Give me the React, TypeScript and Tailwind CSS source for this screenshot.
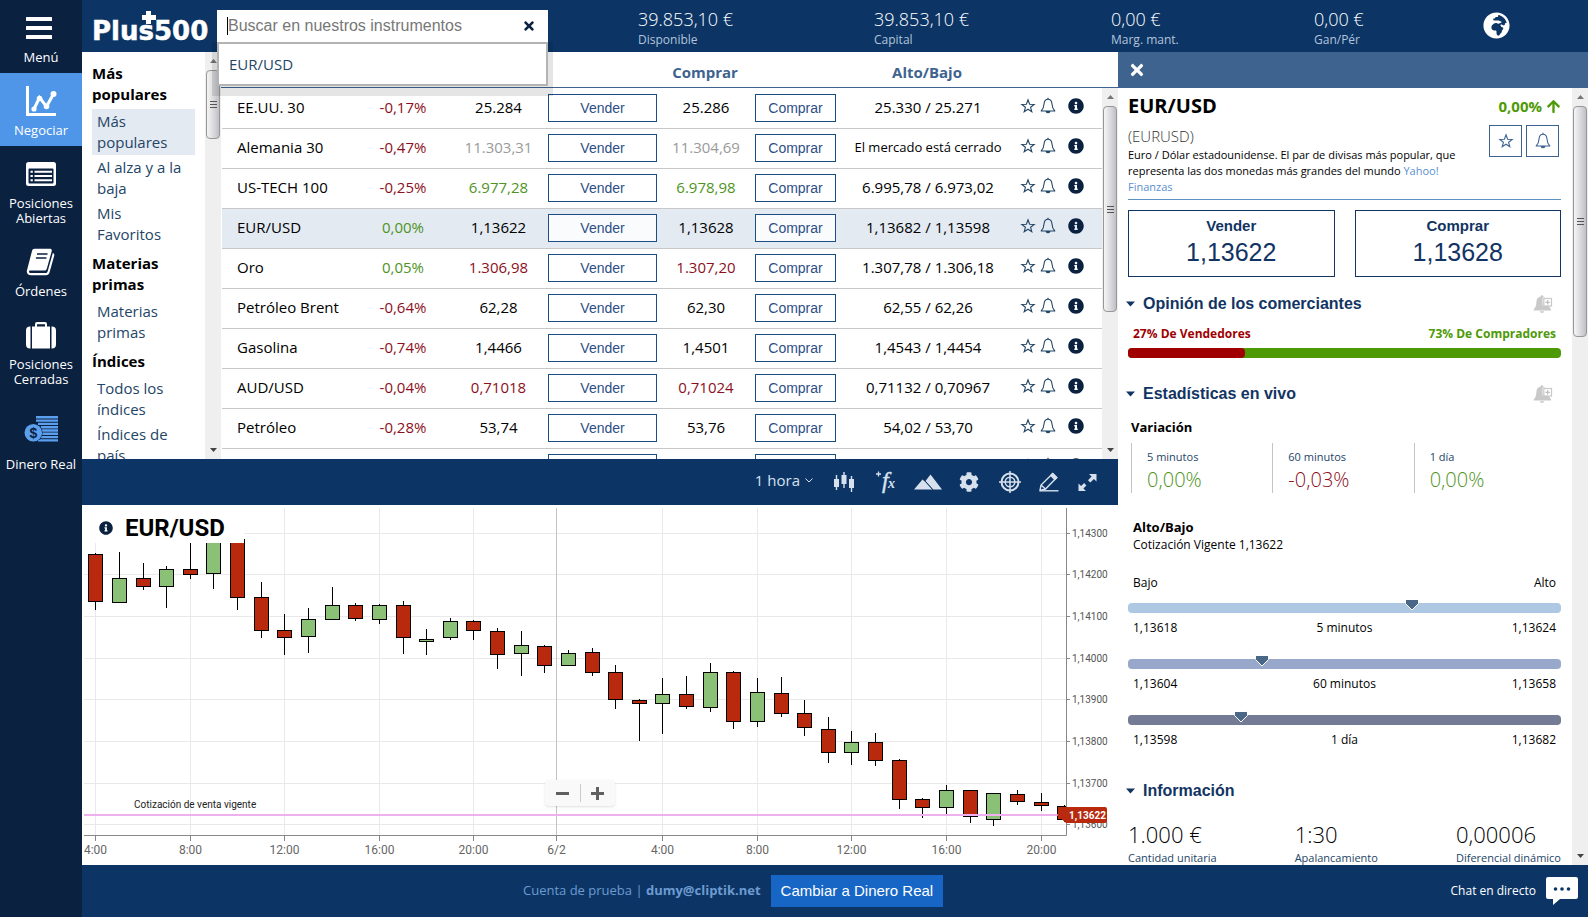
import { useState } from "react";
import { FaArrowUp, FaCog, FaGlobeAfrica, FaInfoCircle, FaTimes } from "react-icons/fa";

type Tone = "up" | "down" | "flat" | "closed";

const toneClass: Record<Tone, string> = {
  up: "text-[#4e9424]",
  down: "text-[#8c0f22]",
  flat: "text-black",
  closed: "text-[#9a9a9a]",
};

const instruments: { name: string; pct: string; sell: string; buy: string; range: string; tone: Tone }[] = [
  { name: "EE.UU. 30", pct: "-0,17%", sell: "25.284", buy: "25.286", range: "25.330 / 25.271", tone: "flat" },
  { name: "Alemania 30", pct: "-0,47%", sell: "11.303,31", buy: "11.304,69", range: "El mercado está cerrado", tone: "closed" },
  { name: "US-TECH 100", pct: "-0,25%", sell: "6.977,28", buy: "6.978,98", range: "6.995,78 / 6.973,02", tone: "up" },
  { name: "EUR/USD", pct: "0,00%", sell: "1,13622", buy: "1,13628", range: "1,13682 / 1,13598", tone: "flat" },
  { name: "Oro", pct: "0,05%", sell: "1.306,98", buy: "1.307,20", range: "1.307,78 / 1.306,18", tone: "down" },
  { name: "Petróleo Brent", pct: "-0,64%", sell: "62,28", buy: "62,30", range: "62,55 / 62,26", tone: "flat" },
  { name: "Gasolina", pct: "-0,74%", sell: "1,4466", buy: "1,4501", range: "1,4543 / 1,4454", tone: "flat" },
  { name: "AUD/USD", pct: "-0,04%", sell: "0,71018", buy: "0,71024", range: "0,71132 / 0,70967", tone: "down" },
  { name: "Petróleo", pct: "-0,28%", sell: "53,74", buy: "53,76", range: "54,02 / 53,70", tone: "flat" },
  { name: "", pct: "", sell: "", buy: "", range: "", tone: "flat" },
];

const categories = [
  { title: "Más populares", items: ["Más populares", "Al alza y a la baja", "Mis Favoritos"] },
  { title: "Materias primas", items: ["Materias primas"] },
  { title: "Índices", items: ["Todos los índices", "Índices de país"] },
];

const balances = [
  { value: "39.853,10 €", label: "Disponible" },
  { value: "39.853,10 €", label: "Capital" },
  { value: "0,00 €", label: "Marg. mant." },
  { value: "0,00 €", label: "Gan/Pér" },
];

// x, body top, body bottom, high, low, rising
const candles: [number, number, number, number, number, boolean][] = [
  [13, 49, 96, 48, 104, false],
  [37, 73, 97, 47, 97, true],
  [61, 73, 81, 58, 84, false],
  [84, 64, 81, 61, 102, true],
  [108, 64, 69, 30, 73, false],
  [131, 30, 68, 30, 83, true],
  [155, 34, 92, 34, 104, false],
  [179, 92, 125, 77, 132, false],
  [202, 125, 132, 109, 149, false],
  [226, 114, 131, 103, 147, true],
  [250, 100, 114, 82, 114, true],
  [273, 100, 113, 98, 115, false],
  [297, 100, 114, 99, 118, true],
  [321, 100, 132, 96, 148, false],
  [344, 134, 136, 124, 149, true],
  [368, 116, 132, 113, 134, true],
  [391, 116, 125, 115, 134, false],
  [415, 126, 149, 123, 163, false],
  [439, 140, 148, 126, 170, true],
  [462, 141, 160, 140, 167, false],
  [486, 148, 160, 145, 160, true],
  [510, 147, 167, 143, 170, false],
  [533, 167, 194, 160, 203, false],
  [557, 195, 198, 194, 235, false],
  [580, 189, 198, 173, 228, true],
  [604, 189, 201, 171, 203, false],
  [628, 167, 202, 158, 206, true],
  [651, 167, 216, 166, 223, false],
  [675, 187, 216, 173, 221, true],
  [699, 188, 208, 172, 211, false],
  [722, 208, 222, 195, 230, false],
  [746, 224, 247, 212, 257, false],
  [769, 237, 247, 226, 259, true],
  [793, 237, 255, 228, 260, false],
  [817, 255, 294, 254, 303, false],
  [840, 294, 302, 293, 312, false],
  [864, 285, 302, 280, 308, true],
  [888, 285, 311, 285, 317, false],
  [911, 288, 314, 288, 320, true],
  [935, 289, 296, 285, 299, false],
  [959, 297, 300, 288, 305, false],
  [982, 301, 314, 300, 316, false],
];

const timeTicks: [number, string][] = [
  [13, "4:00"], [108, "8:00"], [202, "12:00"], [297, "16:00"], [391, "20:00"], [474, "6/2"],
  [580, "4:00"], [675, "8:00"], [769, "12:00"], [864, "16:00"], [959, "20:00"],
];

const priceTicks: [number, string][] = [
  [28, "1,14300"], [69, "1,14200"], [111, "1,14100"], [153, "1,14000"],
  [194, "1,13900"], [236, "1,13800"], [278, "1,13700"], [319, "1,13600"],
];

/* ---------- icons ---------- */

function StarIcon() {
  return (
    <svg width="16" height="16" viewBox="0 0 16 16" fill="none" stroke="currentColor" strokeWidth="1.1" strokeLinejoin="miter">
      <path d="M8 1.8l1.600 4.400 4.600.2-3.600 2.900 1.200 4.500L8 11.200 4.200 13.800l1.200-4.500-3.600-2.900 4.600-.2z" />
    </svg>
  );
}

function BellIcon() {
  return (
    <svg width="16" height="18" viewBox="0 0 16 18" fill="none" stroke="currentColor" strokeWidth="1.1" strokeLinejoin="round">
      <path d="M8 2.2c-2.500 0-3.700 1.900-3.900 4.300-.2 3.300-.6 5.200-2.900 7.500h13.600c-2.300-2.300-2.700-4.200-2.900-7.500C11.700 4.100 10.500 2.200 8 2.200z" />
      <path d="M8 .8v1.400" />
      <path d="M6.200 14.500a1.900 1.900 0 0 0 3.600 0z" fill="currentColor" />
    </svg>
  );
}

function BellPlusIcon() {
  return (
    <svg width="20" height="20" viewBox="0 0 20 20" fill="#c9c9c9">
      <path d="M9 1.200c.8 0 1.200.5 1.200 1.200 1 .2 1.800.5 2.400 1.100H9.600v8h6.200c.4 1.500 1.200 2.700 2.200 3.700v1.300H.8v-1.300c2-1.900 2.500-4.300 2.600-7.400.1-3 1.600-4.900 4.400-5.400 0-.7.400-1.200 1.200-1.200zM6.800 17.300h4.400c-.2 1-1 1.700-2.200 1.700s-2-.7-2.200-1.700z" />
      <rect x="10.800" y="4.500" width="7.700" height="7.500" fill="#fff" stroke="#c9c9c9" strokeWidth="1.200" />
      <path d="M14.650 6v4.600M12.400 8.300h4.500" stroke="#c0c0c0" strokeWidth="1.200" />
    </svg>
  );
}

function MenuIcon() {
  return (
    <svg width="26" height="22" viewBox="0 0 26 22" fill="currentColor" className="-translate-x-[2px]">
      <rect width="26" height="4" rx="0.500" />
      <rect y="9" width="26" height="4" rx="0.500" />
      <rect y="18" width="26" height="4" rx="0.500" />
    </svg>
  );
}

function TradeIcon() {
  return (
    <svg width="32" height="32" viewBox="0 0 32 32" fill="none" stroke="currentColor">
      <path d="M2.500 1v28.500H31" strokeWidth="3" />
      <path d="M9 24l5.500-11.500 7 9L28.500 9" strokeWidth="3" />
      <g fill="currentColor" stroke="none">
        <circle cx="9" cy="24" r="2.600" />
        <circle cx="14.500" cy="13.500" r="2.800" />
        <circle cx="21.500" cy="21.500" r="2.800" />
        <circle cx="28.500" cy="9" r="3" />
      </g>
    </svg>
  );
}

function ListIcon() {
  return (
    <svg width="30" height="24" viewBox="0 0 30 24">
      <rect width="30" height="24" rx="2.500" fill="#fff" />
      <rect x="2.500" y="6.500" width="25" height="15" rx="1" fill="#0a2140" />
      <g stroke="#fff" strokeWidth="2">
        <path d="M4.500 9.800h2.300M8.500 9.800H26M4.500 14h2.300M8.500 14H26M4.500 18.200h2.300M8.500 18.200H26" />
      </g>
    </svg>
  );
}

function BookIcon() {
  return (
    <svg width="30" height="28" viewBox="0 0 30 28">
      <path d="M8.500.8h15.300c1.600 0 2.300 1 1.900 2.500l-4.900 17.400c-.4 1.300-1.400 1.900-2.700 1.900H4.500c-1 0-1.700.7-1.500 1.500.2.700.8 1 1.700 1h14.600c1.200 0 2-.7 2.400-1.900L26.800 5c1.200.5 1.800 1.400 1.400 2.700l-4.700 16.800c-.5 1.700-1.700 2.700-3.500 2.700H5c-2.600 0-4.500-1.800-4.200-4.300L6 3c.4-1.400 1.200-2.200 2.500-2.200z" fill="#fff" />
      <path d="M11 6h10.500M9.900 10h10.500" stroke="#0a2140" strokeWidth="1.600" />
    </svg>
  );
}

function SuitcaseIcon() {
  return (
    <svg width="30" height="27" viewBox="0 0 30 27" fill="currentColor">
      <path d="M4.500 4.500v22H4a4 4 0 0 1-4-4v-14a4 4 0 0 1 4-4zM25.500 4.500v22h.5a4 4 0 0 0 4-4v-14a4 4 0 0 0-4-4z" />
      <path d="M6 4.500h3V2a2 2 0 0 1 2-2h8a2 2 0 0 1 2 2v2.500h3v22H6zM11 2.200v2.300h8V2.200z" fillRule="evenodd" />
    </svg>
  );
}

function CoinsIcon() {
  return (
    <svg width="34" height="26" viewBox="0 0 34 26">
      <path d="M12 1.300h22M12 4.600h22M14 7.900h20M17 11.200h17M18 14.500h16M18 17.800h16M17 21.100h17M14 24.400h20" stroke="#5b9fee" strokeWidth="2.400" />
      <circle cx="9.300" cy="16.700" r="9.300" fill="#0a2140" />
      <circle cx="9.300" cy="16.700" r="8.800" fill="#5b9fee" />
      <text x="9.300" y="22" textAnchor="middle" className="fill-[#0a2140] font-['Liberation_Sans',sans-serif] text-[14px] font-bold">$</text>
    </svg>
  );
}

function Caret() {
  return (
    <svg width="9" height="6" viewBox="0 0 9 6" fill="#123463">
      <path d="M0 .5h9L4.500 5.500z" />
    </svg>
  );
}

function Logo() {
  return (
    <svg width="118" height="32" viewBox="0 0 118 32" fill="#fff" role="img" aria-label="Plus500">
      <text x="0" y="30" className="font-['DejaVu_Sans',sans-serif] text-[26px] font-bold" stroke="#fff" strokeWidth="0.500">Plus500</text>
      <path d="M54 1h5v4h5v5h-5v4h-5v-4h-4V5h4z" />
    </svg>
  );
}

/* ---------- pieces ---------- */

function Scrollbar({ thumb }: { thumb: string }) {
  return (
    <div aria-hidden="true" className="flex w-4 shrink-0 flex-col items-center bg-[#efefef]">
      <div className="flex h-[18px] items-center">
        <svg width="7" height="4" viewBox="0 0 7 4" fill="#777"><path d="M0 4h7L3.500 0z" /></svg>
      </div>
      <div className={`flex w-[14px] flex-col items-center justify-center gap-[2px] rounded-sm border border-[#979797] bg-linear-to-r from-[#f5f5f5] via-[#dcdce0] to-[#bfbfc6] ${thumb}`}>
        <i className="h-px w-[7px] bg-[#555]" />
        <i className="h-px w-[7px] bg-[#555]" />
        <i className="h-px w-[7px] bg-[#555]" />
      </div>
      <div className="mt-auto flex h-[18px] items-center">
        <svg width="7" height="4" viewBox="0 0 7 4" fill="#444"><path d="M0 0h7L3.500 4z" /></svg>
      </div>
    </div>
  );
}

function NavItem({ icon, label, active }: { icon: React.ReactNode; label: string; active?: boolean }) {
  return (
    <button className={`flex w-full flex-col items-center pt-[14px] pb-2 text-[13px] leading-[15px] text-white ${active ? "bg-[#4f96e8]" : ""}`}>
      <span className="mb-2 flex h-7 items-center">{icon}</span>
      <span>{label}</span>
    </button>
  );
}

function Sidebar() {
  return (
    <nav className="w-[82px] shrink-0 bg-[#0a2140]">
      <NavItem icon={<MenuIcon />} label="Menú" />
      <NavItem icon={<TradeIcon />} label="Negociar" active />
      <NavItem icon={<ListIcon />} label="Posiciones Abiertas" />
      <NavItem icon={<BookIcon />} label="Órdenes" />
      <NavItem icon={<SuitcaseIcon />} label="Posiciones Cerradas" />
      <button className="mt-3 flex w-full flex-col items-center pt-[9px] pb-2 text-[13px] leading-[15px] text-white">
        <span className="mb-[15px] flex h-[26px] items-center">
          <CoinsIcon />
        </span>
        <span>Dinero Real</span>
      </button>
    </nav>
  );
}

function Search() {
  const [query, setQuery] = useState("");
  return (
    <div className="relative ml-[7px] w-[331px]">
      <div className="flex h-8 items-center bg-white pr-3 pl-[10px]">
        <span className="h-[18px] w-px shrink-0 bg-black" />
        <input
          aria-label="Buscar"
          value={query}
          onChange={(e) => setQuery(e.target.value)}
          placeholder="Buscar en nuestros instrumentos"
          className="min-w-0 flex-1 font-['Liberation_Sans',Arial,sans-serif] text-base text-black outline-none placeholder:text-[#777]"
        />
        <button aria-label="Borrar" className="text-[#0a2140]"><FaTimes size={14} /></button>
      </div>
      <div className="absolute top-8 right-0 left-0 z-10 border-2 border-[#b4b4b4] bg-white shadow-[0_5px_0_5px_rgba(0,0,0,0.1)]">
        <a href="#eurusd" className="block px-[10px] py-[10px] text-[15px] leading-5 text-[#234566]">EUR/USD</a>
      </div>
    </div>
  );
}

function TopBar() {
  return (
    <header className="flex h-[52px] shrink-0 items-center bg-[#0c3566] pl-[10px]">
      <Logo />
      <Search />
      <div className="ml-[90px] grid flex-1 grid-cols-[236fr_237fr_203fr_274fr] pt-1 text-white">
        {balances.map((b, i) => (
          <div key={i} className="relative">
            <div className="text-[18px] leading-6 font-light">{b.value}</div>
            <div className="text-[12px] leading-[18px] text-[#b3c4da]">{b.label}</div>
            {i === 3 && (
              <button aria-label="Idioma" className="absolute top-[5px] right-[78px]">
                <FaGlobeAfrica size={27} />
              </button>
            )}
          </div>
        ))}
      </div>
    </header>
  );
}

function Categories() {
  return (
    <aside className="flex w-[139px] shrink-0 overflow-hidden bg-white">
      <div className="flex-1 pt-[11px] pr-[10px] pl-[10px] text-[15px] leading-[21px]">
        {categories.map((c, ci) => (
          <section key={c.title}>
            <h3 className={`mb-1 font-bold text-black ${ci ? "mt-[6px]" : ""}`}>{c.title}</h3>
            {c.items.map((item, i) => (
              <a key={item} href="#cat" className={`block py-[2px] pr-2 pl-[5px] text-[#234566] ${ci === 0 && i === 0 ? "bg-[#e3eaf2]" : ""}`}>
                {item}
              </a>
            ))}
          </section>
        ))}
      </div>
      <Scrollbar thumb="h-[69px]" />
    </aside>
  );
}

const tradeButton =
  "h-7 w-full border border-[#1d4d86] bg-white/80 font-['Liberation_Sans',Arial,sans-serif] text-[14px] leading-none text-[#2d4f86]";

function Instruments() {
  return (
    <section className="flex min-w-0 flex-1 flex-col overflow-hidden bg-white">
      <div className="grid h-9 shrink-0 grid-cols-[1fr_98px_81px_184px_99px] items-center border-b border-[#3e638f] pt-[6px] text-center text-[15px] font-bold text-[#3e638f]">
        <span />
        <span>Comprar</span>
        <span />
        <span>Alto/Bajo</span>
        <span />
      </div>
      <div className="flex min-h-0 flex-1">
        <div className="min-w-0 flex-1 overflow-hidden pl-px">
          <table className="w-full table-fixed border-collapse text-center text-[15px] leading-[22px] text-black">
            <colgroup>
              <col />
              <col className="w-[92px]" />
              <col className="w-[99px]" />
              <col className="w-[109px]" />
              <col className="w-[98px]" />
              <col className="w-[81px]" />
              <col className="w-[184px]" />
              <col className="w-[82px]" />
            </colgroup>
            <tbody>
              {instruments.map((r, i) => (
                <tr key={i} className={`h-10 border-b border-[#c8c8c8] ${r.name === "EUR/USD" ? "bg-[#e3eaf2]" : ""}`}>
                  <td className="pb-[2px] pl-[15px] text-left whitespace-nowrap">{r.name}</td>
                  <td className={`pb-[2px] ${r.pct.startsWith("-") ? toneClass.down : toneClass.up}`}>{r.pct}</td>
                  <td className={`pb-[2px] ${toneClass[r.tone]}`}>{r.sell}</td>
                  <td><button className={tradeButton}>Vender</button></td>
                  <td className={`pb-[2px] ${toneClass[r.tone]}`}>{r.buy}</td>
                  <td><button className={tradeButton}>Comprar</button></td>
                  <td className={`pb-[2px] ${r.tone === "closed" ? "text-[13px]" : ""}`}>{r.range}</td>
                  <td className="pb-1">
                    <div className="flex items-center text-[#234566]">
                      <button aria-label="Favorito"><StarIcon /></button>
                      <button aria-label="Alerta" className="ml-1"><BellIcon /></button>
                      <button aria-label="Información" className="ml-3 text-[#0a2140]"><FaInfoCircle size={16} /></button>
                    </div>
                  </td>
                </tr>
              ))}
            </tbody>
          </table>
        </div>
        <Scrollbar thumb="h-[206px]" />
      </div>
    </section>
  );
}

function ChartToolbar() {
  return (
    <div className="flex h-[46px] shrink-0 items-center justify-end bg-[#0c3566] pr-[21px] text-[#d7e1ee]">
      <button className="flex items-center gap-[5px] pb-1 text-[15px]">
        1 hora
        <svg width="8" height="5" viewBox="0 0 8 5" fill="none" stroke="currentColor"><path d="M.5.5L4 4 7.500.5" /></svg>
      </button>
      <button aria-label="Tipo de gráfico" className="ml-[20px]">
        <svg width="22" height="22" viewBox="0 0 22 22" fill="currentColor">
          <path d="M1 8h5v8H1zM8.500 4h5v9h-5zM16 8h5v9h-5z" />
          <path d="M3.500 4v15M11 1v16M18.500 5v16" stroke="currentColor" strokeWidth="1.400" />
        </svg>
      </button>
      <button aria-label="Indicadores" className="ml-[20px]">
        <svg width="22" height="24" viewBox="0 0 22 24" fill="currentColor">
          <text x="7" y="18" className="font-['Liberation_Serif',serif] text-[24px] italic" stroke="currentColor" strokeWidth="0.400">f</text>
          <text x="13" y="18" className="font-['Liberation_Serif',serif] text-[14px] font-bold italic">x</text>
          <path d="M3.500 1.500v5M1 4h5" stroke="currentColor" strokeWidth="1.300" />
        </svg>
      </button>
      <button aria-label="Área" className="ml-[17px]">
        <svg width="28" height="16" viewBox="0 0 28 16" fill="currentColor">
          <path d="M0 15.500L8.500 5.500l4 3.500 6 6.500z" />
          <path d="M11.500 7L16.500.5 28 15.500H19z" />
          <path d="M11.300 7.300l7.500 8.400" stroke="#0c3566" strokeWidth="1" />
        </svg>
      </button>
      <button aria-label="Ajustes" className="ml-[17px]"><FaCog size={20} /></button>
      <button aria-label="Cursor" className="ml-[20px]">
        <svg width="22" height="22" viewBox="0 0 22 22" fill="none" stroke="currentColor" strokeWidth="1.500">
          <circle cx="11" cy="11" r="8.500" strokeWidth="2" />
          <circle cx="11" cy="11" r="4.800" />
          <path d="M11 0v22M0 11h22" />
        </svg>
      </button>
      <button aria-label="Dibujar" className="ml-[18px]">
        <svg width="20" height="20" viewBox="0 0 20 20" fill="none" stroke="currentColor" strokeWidth="1.400">
          <path d="M1 18.500l1-5.500L13.500 1.800l4 4L6.500 17zM2 13l4.500 4" />
          <path d="M11.800 3.500l4 4 2-2-4-4z" fill="currentColor" />
          <path d="M1 18.800h18.500" />
        </svg>
      </button>
      <button aria-label="Pantalla completa" className="ml-[19px]">
        <svg width="19" height="19" viewBox="0 0 19 19" fill="currentColor">
          <path d="M11 1h7.500v7.500l-2.600-2.600-3.600 3.600-2.300-2.300 3.600-3.600zM8 18H.5v-7.500l2.600 2.600 3-3 2.300 2.300-3 3z" />
        </svg>
      </button>
    </div>
  );
}

function Chart() {
  return (
    <div className="relative shrink-0 bg-white">
      <svg viewBox="0 0 1036 360" className="block w-full font-[Roboto,sans-serif]">
        <g fill="none" stroke="#e9e9e9">
          {priceTicks.map(([y]) => <path key={y} d={`M2 ${y + 0.5}H984`} />)}
          {timeTicks.map(([x, label]) => (
            <path key={x} d={`M${x + 0.5} 3V330`} stroke={label === "6/2" ? "#c4c4c4" : "#e9e9e9"} />
          ))}
        </g>
        <g stroke="#000">
          {candles.map(([x, top, bottom, high, low, up]) => (
            <g key={x}>
              <path d={`M${x + 0.5} ${high}V${low + 1}`} />
              <rect x={x - 6.5} y={top + 0.5} width={x > 980 ? 9 : 14} height={bottom - top} fill={up ? "#8bc077" : "#b8290d"} />
            </g>
          ))}
        </g>
        <path d="M2 310H984" stroke="#eeb0ee" strokeWidth="2" />
        <g fill="none" stroke="#888">
          <path d="M2 330.500H984.500M984.500 3V330.500" />
          {timeTicks.map(([x]) => <path key={x} d={`M${x + 0.5} 330V336`} />)}
          {priceTicks.map(([y]) => <path key={y} d={`M984 ${y + 0.5}H988`} />)}
        </g>
        <g className="text-[12px]" fill="#666" textAnchor="middle">
          {timeTicks.map(([x, label]) => <text key={x} x={x + 0.5} y="349">{label}</text>)}
        </g>
        <g className="text-[10px]" fill="#555">
          {priceTicks.map(([y, label]) => <text key={y} x="990" y={y + 4}>{label}</text>)}
        </g>
        <path d="M975 310l9 8h39a2 2 0 0 0 2-2v-12a2 2 0 0 0-2-2h-39z" fill="#b8290d" />
        <text x="987" y="314" fill="#fff" className="text-[10px] font-bold">1,13622</text>
        <text x="52" y="303" fill="#222" className="text-[10px]">Cotización de venta vigente</text>
      </svg>
      <div className="absolute top-0 left-0 flex h-[38px] w-[162px] items-center bg-white pt-2 pl-[17px]">
        <FaInfoCircle size={14} className="text-[#0a2140]" />
        <h2 className="ml-3 font-[Roboto,sans-serif] text-[24px] leading-7 font-bold text-black">EUR/USD</h2>
      </div>
      <div className="absolute bottom-[59px] left-[463px] flex h-[26px] w-[70px] items-center rounded-sm bg-[#f9f9f9] text-[#606060] shadow">
        <button aria-label="Alejar" className="flex flex-1 justify-center">
          <svg width="13" height="13" viewBox="0 0 13 13"><path d="M0 6.500h13" stroke="currentColor" strokeWidth="3" /></svg>
        </button>
        <span className="h-[18px] w-px bg-[#ccc]" />
        <button aria-label="Acercar" className="flex flex-1 justify-center">
          <svg width="13" height="13" viewBox="0 0 13 13"><path d="M0 6.500h13M6.500 0v13" stroke="currentColor" strokeWidth="3" /></svg>
        </button>
      </div>
    </div>
  );
}

function SectionTitle({ title, alert }: { title: string; alert?: boolean }) {
  return (
    <div className="flex h-6 items-center pr-2">
      <button className="-ml-[2px] flex flex-1 items-center gap-2 text-left font-['Liberation_Sans',Arial,sans-serif] text-base font-bold text-[#123463]">
        <Caret />
        {title}
      </button>
      {alert && <button aria-label="Añadir alerta"><BellPlusIcon /></button>}
    </div>
  );
}

const variations = [
  { label: "5 minutos", value: "0,00%", tone: "up" as Tone },
  { label: "60 minutos", value: "-0,03%", tone: "down" as Tone },
  { label: "1 día", value: "0,00%", tone: "up" as Tone },
];

const ranges = [
  { low: "1,13618", label: "5 minutos", high: "1,13624", at: 65.5, color: "bg-[#aec8e4]" },
  { low: "1,13604", label: "60 minutos", high: "1,13658", at: 31, color: "bg-[#97a8ca]" },
  { low: "1,13598", label: "1 día", high: "1,13682", at: 26, color: "bg-[#737c94]" },
];

const infos = [
  { value: "1.000 €", label: "Cantidad unitaria" },
  { value: "1:30", label: "Apalancamiento" },
  { value: "0,00006", label: "Diferencial dinámico" },
];

const quoteButton = "h-[67px] border border-[#123463] pb-1 font-['Liberation_Sans',Arial,sans-serif] text-[#123463]";

function Details() {
  return (
    <aside className="flex w-[470px] shrink-0 flex-col bg-white">
      <div className="flex h-9 shrink-0 items-center bg-[#3e638f] pl-[10px] text-white">
        <button aria-label="Cerrar"><FaTimes size={18} /></button>
      </div>
      <div className="flex min-h-0 flex-1">
        <div className="flex-1 overflow-hidden pt-1 pr-[11px] pl-[10px] text-[12px] text-black">
          <div className="flex h-7 items-center justify-between">
            <h2 className="text-[20px] font-bold">EUR/USD</h2>
            <span className="flex items-center gap-1 text-[15px] font-bold text-[#4e9a06]">
              0,00% <FaArrowUp size={15} />
            </span>
          </div>
          <div className="mt-[5px] flex justify-between">
            <div className="w-[350px]">
              <p className="pt-[2px] text-[15px] leading-[18px] font-light text-[#333]">(EURUSD)</p>
              <p className="mt-[2px] text-[11px] leading-4">
                Euro / Dólar estadounidense. El par de divisas más popular, que representa las dos monedas más grandes del mundo{" "}
                <a href="#yahoo" className="text-[#5a8fd0]">Yahoo! Finanzas</a>
              </p>
            </div>
            <div className="flex gap-1 pr-[2px] text-[#3e638f]">
              <button aria-label="Favorito" className="flex h-8 w-[33px] items-center justify-center border border-[#3e638f]"><StarIcon /></button>
              <button aria-label="Alerta" className="flex h-8 w-[33px] items-center justify-center border border-[#3e638f]"><BellIcon /></button>
            </div>
          </div>
          <div className="mt-1 grid grid-cols-2 gap-5 border-t border-[#5a92c4] pt-[10px]">
            <button className={quoteButton}>
              <span className="block text-[15px] leading-5 font-bold">Vender</span>
              <span className="block text-[25px] leading-8">1,13622</span>
            </button>
            <button className={quoteButton}>
              <span className="block text-[15px] leading-5 font-bold">Comprar</span>
              <span className="block text-[25px] leading-8">1,13628</span>
            </button>
          </div>

          <div className="mt-[15px]"><SectionTitle title="Opinión de los comerciantes" alert /></div>
          <div className="mt-[9px] flex justify-between px-[5px] leading-[18px] font-bold">
            <span className="text-[#a00000]">27% De Vendedores</span>
            <span className="text-[#4e9a06]">73% De Compradores</span>
          </div>
          <div className="mt-[5px] h-[10px] rounded bg-[#4e9a06]">
            <div className="h-full w-[27%] rounded bg-[#a00000]" />
          </div>

          <div className="mt-6"><SectionTitle title="Estadísticas en vivo" alert /></div>
          <h3 className="mt-3 pl-[3px] text-[13px] leading-[18px] font-bold">Variación</h3>
          <div className="mt-[7px] mr-[6px] ml-[3px] grid grid-cols-3">
            {variations.map((v) => (
              <div key={v.label} className="border-l border-[#c4c4c4] pt-[5px] pl-[15px]">
                <div className="text-[11px] leading-[18px] text-[#234566]">{v.label}</div>
                <div className={`text-[20px] leading-[27px] font-light ${toneClass[v.tone]}`}>{v.value}</div>
              </div>
            ))}
          </div>

          <div className="mt-[26px] pl-[5px] leading-[17px]">
            <h3 className="text-[13px] font-bold">Alto/Bajo</h3>
            <p>Cotización Vigente 1,13622</p>
          </div>
          <div className="mt-[21px] flex justify-between px-[5px] leading-[18px]">
            <span>Bajo</span>
            <span>Alto</span>
          </div>
          <div className="mt-[11px] flex flex-col gap-5">
            {ranges.map((r) => (
              <div key={r.label}>
                <div className={`relative h-[10px] rounded ${r.color}`}>
                  <svg className="absolute -top-[4px] -ml-[8px]" style={{ left: `${r.at}%` }} width="16" height="12" viewBox="0 0 16 12">
                    <path d="M1.500.5h13v4L8 11 1.500 4.500z" fill="#4a6788" stroke="#fff" />
                  </svg>
                </div>
                <div className="mt-1 grid grid-cols-3 px-[5px] leading-[22px]">
                  <span>{r.low}</span>
                  <span className="text-center">{r.label}</span>
                  <span className="text-right">{r.high}</span>
                </div>
              </div>
            ))}
          </div>

          <div className="mt-7"><SectionTitle title="Información" /></div>
          <div className="mt-[15px] flex justify-between">
            {infos.map((v) => (
              <div key={v.label}>
                <div className="text-[22px] leading-8 font-light">{v.value}</div>
                <div className="text-[11px] leading-4 text-[#234566]">{v.label}</div>
              </div>
            ))}
          </div>
        </div>
        <Scrollbar thumb="h-[231px]" />
      </div>
    </aside>
  );
}

function Footer() {
  return (
    <footer className="flex h-[52px] shrink-0 items-center bg-[#0c3566] pr-[10px] pl-[441px]">
      <p className="text-[13px] text-[#6d9bd0]">
        Cuenta de prueba | <b>dumy@cliptik.net</b>
      </p>
      <button className="ml-[10px] h-8 bg-[#1766c6] px-[10px] font-['Liberation_Sans',Arial,sans-serif] text-[15px] text-white">
        Cambiar a Dinero Real
      </button>
      <button className="ml-auto flex items-center gap-[10px] text-[12px] text-white">
        Chat en directo
        <svg width="32" height="28" viewBox="0 0 32 28">
          <path d="M2 0h28a2 2 0 0 1 2 2v18a2 2 0 0 1-2 2H14l-7 6v-6H2a2 2 0 0 1-2-2V2a2 2 0 0 1 2-2z" fill="#fff" />
          <g fill="#0c3566">
            <circle cx="9.500" cy="12" r="1.800" />
            <circle cx="16" cy="12" r="1.800" />
            <circle cx="22.500" cy="12" r="1.800" />
          </g>
        </svg>
      </button>
    </footer>
  );
}

export default function App() {
  return (
    <div className="flex h-screen overflow-hidden bg-[#0a2140] font-['Open_Sans','Segoe_UI',sans-serif]">
      <Sidebar />
      <div className="flex min-w-0 flex-1 flex-col">
        <TopBar />
        <div className="flex min-h-0 flex-1">
          <main className="flex min-w-0 flex-1 flex-col">
            <div className="flex min-h-0 flex-1">
              <Categories />
              <Instruments />
            </div>
            <ChartToolbar />
            <Chart />
          </main>
          <Details />
        </div>
        <Footer />
      </div>
    </div>
  );
}
